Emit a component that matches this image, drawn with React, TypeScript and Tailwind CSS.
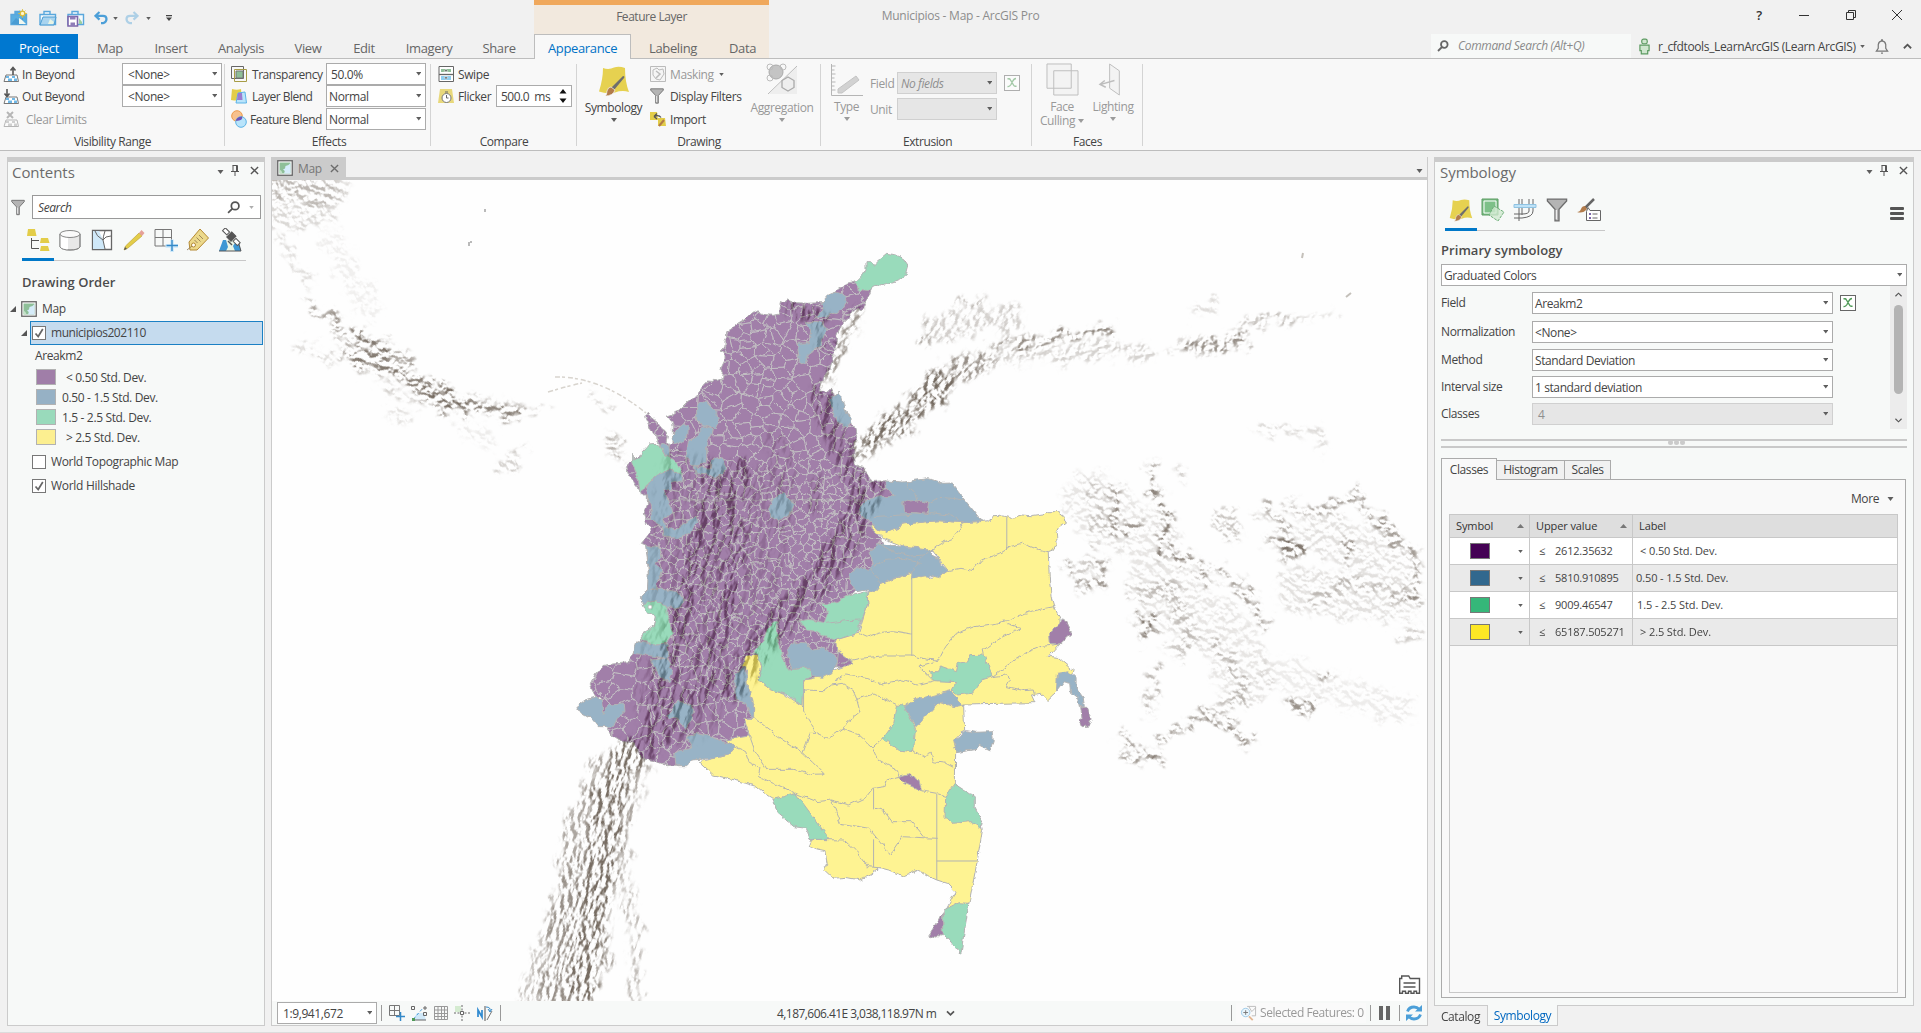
import React from "react";

/* ---------- small shared pieces ---------- */

const Caret = ({ className = "h-[3.5px] w-[5.5px]" }: { className?: string }) => (
  <svg viewBox="0 0 6 4" className={`shrink-0 ${className}`} fill="#5e5e5e">
    <path d="M0 0h6L3 4z" />
  </svg>
);

const CaretUp = () => (
  <svg viewBox="0 0 7 4" className="h-[4px] w-[7px] shrink-0" fill="#777">
    <path d="M0 4h7L3.500 0z" />
  </svg>
);

const CloseX = ({ className = "h-[10px] w-[10px]" }: { className?: string }) => (
  <svg viewBox="0 0 10 10" className={className} stroke="#555" strokeWidth="1.5" fill="none">
    <path d="M1 1l8 8M9 1L1 9" />
  </svg>
);

const Pin = () => (
  <svg viewBox="0 0 8 11" className="h-[11px] w-[8px]" stroke="#555" fill="none">
    <path d="M1.500.5h5M2 .5v6M5.500.5v6M6.500.5v6M0 6.500h8M4 7v4" />
  </svg>
);

function Select({
  value,
  className = "",
  disabled = false,
  italic = false,
}: {
  value: string;
  className?: string;
  disabled?: boolean;
  italic?: boolean;
}) {
  return (
    <div
      className={`flex h-[22px] shrink-0 items-center justify-between border pr-[4px] ${
        disabled ? "border-[#d0d0d0] bg-[#e6e6e6] text-[#8f8f8f]" : "border-[#ababab] bg-white"
      } ${className}`}
    >
      <span className={`pt-[2px] ${italic ? "italic" : ""}`}>{value}</span>
      <Caret />
    </div>
  );
}

const BrushSheet = ({ className }: { className: string }) => (
  <svg viewBox="0 0 32 32" className={className}>
    <path d="M5 3q6 2 11-.5 5-1.500 11 .5 0 14 4 24-7-2-14 .5-8 2-16-1Q5 14 5 3z" fill="#e6d150" />
    <path d="M25 11q2 0 1 2l-10 12-3-2z" fill="#6e6e6e" />
    <path d="M13 22l4 3q-2 6-10 6 2-1 2-5 1-4 4-4z" fill="#b27b4a" stroke="#f7f9f8" strokeWidth=".7" />
  </svg>
);

const Funnel = ({ className }: { className: string }) => (
  <svg viewBox="0 0 16 18" className={className} fill="#b4b4b4" stroke="#6d6d6d">
    <path d="M.8.8h14.400v1.500L9.500 8.500v8.700H6.500V8.500L.8 2.300z" />
    <path d="M7.500 9v7" stroke="#eee" />
  </svg>
);

const MapIcon = () => (
  <svg viewBox="0 0 16 16" className="h-[16px] w-[16px] shrink-0">
    <rect x=".75" y=".75" width="14.500" height="14.500" fill="#fff" stroke="#666" strokeWidth="1.300" />
    <path d="M2.500 2.500h11v11h-11z" fill="#8ebf98" />
    <path d="M13.500 3v10.500H7l.8-2.500L6 9.500l2-1 .5-2.500 3-1z" fill="#d6ecfa" />
    <path d="M2.500 9.500l2 1.500 1 2.500h-3z" fill="#c5e2ca" />
  </svg>
);

const ExprIcon = ({ faded = false }: { faded?: boolean }) => (
  <svg viewBox="0 0 16 16" className={`h-[16px] w-[16px] shrink-0 ${faded ? "opacity-50" : ""}`} fill="none">
    <rect x=".5" y=".5" width="15" height="15" fill="#fff" stroke="#666" />
    <path d="M3.500 4q2-1 3 1l3 5q1 2 3 1M12 3.500q-2 0-3.500 3L7 9.500q-1.500 2.500-3.500 2" stroke="#4f9a57" strokeWidth="1.400" />
  </svg>
);

/* ---------- ribbon ---------- */

const FolderIcon = ({ kind }: { kind: "new" | "open" | "save" }) => (
  <svg viewBox="0 0 18 18" className="h-[18px] w-[18px]" fill="none">
    <path d="M5 5V2.500h6V5M1 5.500h15.500v10H1z" stroke="#5aa7dc" strokeWidth="1.400" fill={kind === "new" ? "#5aaee0" : "#f4fafd"} />
    {kind === "new" && <path d="M1 15l5-6 4 3 3-4v8z" fill="#4a9cd3" />}
    {kind === "new" && <path d="M9 15V9l3 2 4 4z" fill="#f2f8f0" />}
    {kind === "new" && <path d="M12.500 0v9M8 4.500h9M9.500 1.500l6 6M15.500 1.500l-6 6" stroke="#d9bb3c" strokeWidth=".8" />}
    {kind === "new" && <circle cx="12.500" cy="4.500" r="2.300" fill="#fff6cf" stroke="#d9bb3c" strokeWidth="1.300" />}
    {kind === "open" && <path d="M4 8h13l-2 8H1z" fill="#a9d4ef" stroke="#4a9cd3" />}
    {kind === "open" && <path d="M9 15l2-5 4 3-1 2z" fill="#e9f4e4" />}
    {kind === "save" && <path d="M1 7.500h9.500v9.500H1z" fill="#fff" stroke="#7d67ab" strokeWidth="1.600" />}
    {kind === "save" && <path d="M3 7.500h5.500v3H3zM3.500 13.500h4.500V17H3.500z" fill="#8f7db8" />}
    {kind === "save" && <path d="M12 9l3 4v2h-3z" fill="#9fcf9f" />}
  </svg>
);

const UndoIcon = ({ redo = false }: { redo?: boolean }) => (
  <svg viewBox="0 0 14 14" className={`h-[14px] w-[14px] ${redo ? "-scale-x-100 opacity-40" : ""}`} fill="none" stroke="#4c9fd8" strokeWidth="2.200">
    <path d="M5.500 1L1.500 4.800l4 3.800M2 4.800h7q3.500 0 3.500 3.200T9 12.200H7" />
  </svg>
);

function TitleBar() {
  return (
    <div className="flex h-[34px] bg-[#f1f1f1]">
      <div className="flex w-[534px] items-center pt-[2px] pl-[10px]">
        <FolderIcon kind="new" />
        <div className="w-[11px]" />
        <FolderIcon kind="open" />
        <div className="w-[10px]" />
        <FolderIcon kind="save" />
        <div className="w-[9px]" />
        <UndoIcon />
        <Caret className="ml-[5px] h-[3px] w-[5px]" />
        <div className="w-[7px]" />
        <UndoIcon redo />
        <Caret className="ml-[7px] h-[3px] w-[5px]" />
        <svg viewBox="0 0 7 7" className="ml-[15px] h-[6px] w-[6px]" fill="#444">
          <path d="M0 0h7v1.400H0zM0 3h7L3.500 7z" />
        </svg>
      </div>
      <div className="flex w-[235px] justify-center border-t-[5px] border-[#f0a85c] bg-[#f2e9de] pt-[3px] tracking-[-0.45px] text-[#666]">Feature Layer</div>
      <div className="flex w-[383px] justify-center pt-[7px] tracking-[-0.25px] text-[#8d8d8d]">Municipios - Map - ArcGIS Pro</div>
      <div className="flex flex-1 items-start justify-end pt-[7px] pr-[18px]">
        <span className="w-[12px] text-center text-[13px] leading-[16px] font-semibold text-[#333]">?</span>
        <svg viewBox="0 0 144 16" className="ml-[34px] h-[16px] w-[104px]" preserveAspectRatio="xMaxYMid slice" stroke="#333" fill="none">
          <path d="M40 8.500h10M87.500 5.500h7v7h-7zM89.500 5.500v-2h7v7h-2M133 3l10 10M143 3l-10 10" />
        </svg>
      </div>
    </div>
  );
}

const tabs: [string, string][] = [
  ["Map", "w-[64px]"],
  ["Insert", "w-[58px]"],
  ["Analysis", "w-[82px]"],
  ["View", "w-[52px]"],
  ["Edit", "w-[60px]"],
  ["Imagery", "w-[70px]"],
  ["Share", "w-[70px]"],
];

function TabRow() {
  return (
    <div className="flex h-[25px] bg-[#f1f1f1] text-[13px] tracking-[-0.35px] text-[#666]">
      <div className="flex w-[78px] items-center justify-center bg-[#0078d0] pt-[4px] text-white">Project</div>
      {tabs.map(([t, w]) => (
        <div key={t} className={`flex items-center justify-center border-b border-[#bdbdbd] pt-[6px] ${w}`}>
          {t}
        </div>
      ))}
      <div className="flex w-[97px] items-center justify-center border-x border-t border-[#bdbdbd] bg-[#f8f8f8] pt-[4px] text-[#0072c6]">Appearance</div>
      <div className="flex w-[138px] items-center border-b border-[#bdbdbd] bg-[#f2e9de] pt-[6px] pl-[18px]">
        <span className="w-[80px]">Labeling</span>
        <span>Data</span>
      </div>
      <div className="flex flex-1 items-center justify-end border-b border-[#bdbdbd] pr-[9px] text-[12px]">
        <div className="flex h-[24px] w-[200px] items-center bg-[#f7f9f8] pl-[6px] tracking-[-0.33px] text-[#8a8a8a] italic">
          <svg viewBox="0 0 12 12" className="mr-[9px] h-[12px] w-[12px]" fill="none" stroke="#666" strokeWidth="1.800">
            <circle cx="7.300" cy="4.500" r="3.300" />
            <path d="M5 7L1 11" />
          </svg>
          Command Search (Alt+Q)
        </div>
        <svg viewBox="0 0 12 18" className="ml-[8px] h-[17px] w-[11px]" fill="#cfe6cf" stroke="#5b9a60" strokeWidth="1.300">
          <rect x="3" y="1" width="6" height="5" rx="2" />
          <path d="M1 7.500h10v6H9.500v3.500h-7v-3.500H1z" />
        </svg>
        <span className="ml-[8px] w-[201px] pt-px tracking-[-0.36px] whitespace-nowrap text-[#444]">r_cfdtools_LearnArcGIS (Learn ArcGIS)</span>
        <Caret className="ml-[1px] h-[3px] w-[5px]" />
        <svg viewBox="0 0 14 16" className="ml-[10px] h-[15px] w-[14px]" fill="none" stroke="#777" strokeWidth="1.300">
          <path d="M1 13h12l-2-3V6q-.5-3.500-4-4-3.500.5-4 4v4zM6 1h2M6 15h2" />
        </svg>
        <svg viewBox="0 0 10 6" className="ml-[14px] h-[6px] w-[9px]" fill="none" stroke="#555" strokeWidth="2">
          <path d="M1 5.500l4-4 4 4" />
        </svg>
      </div>
    </div>
  );
}

function Group({ name, className, children }: { name: string; className: string; children: React.ReactNode }) {
  return (
    <div className={`relative flex shrink-0 flex-col pt-[4px] ${className}`}>
      <div className="h-[69px] shrink-0">{children}</div>
      <div className="shrink-0 pt-[1px] text-center leading-[18px]">{name}</div>
      <div className="absolute top-[5px] right-0 h-[82px] w-px bg-[#d4d4d4]" />
    </div>
  );
}

const BeyondIcon = ({ kind }: { kind: "in" | "out" | "clear" }) => (
  <svg viewBox="0 0 16 16" className={`h-[16px] w-[16px] shrink-0 ${kind === "clear" ? "opacity-50" : ""}`}>
    <path d="M3 9h11l1.500 6.500H1z" fill="#fff" stroke="#777" />
    <path d="M3 10h3v2H3zM9 10h3v2H9zM5 12.500h4v2.500H5zM11 12.500h3V15h-3z" fill={kind === "clear" ? "#aaa" : "#6fb7e6"} />
    {kind === "in" && <path d="M10 9V2M7.500 4.500L10 1.500l2.500 3" stroke="#555" strokeWidth="1.600" fill="none" />}
    {kind === "out" && <path d="M4 1v7M1.500 5.500L4 8.500l2.500-3" stroke="#555" strokeWidth="1.600" fill="none" />}
    {kind === "clear" && <path d="M4 1l6 6M10 1L4 7" stroke="#777" strokeWidth="2" fill="none" />}
  </svg>
);

const BigLabel = ({ children, className = "" }: { children: React.ReactNode; className?: string }) => (
  <div className={`flex flex-col items-center leading-[14px] ${className}`}>{children}</div>
);

function Ribbon() {
  return (
    <div className="flex h-[92px] border-b border-[#bdbdbd] bg-[#f8f8f8]">
      <Group name="Visibility Range" className="w-[225px]">
        {(["In Beyond", "Out Beyond", "Clear Limits"] as const).map((t, i) => (
          <div key={t} className={`flex h-[22px] items-center pl-[3px] ${i === 2 ? "mt-[1px] text-[#999]" : ""}`}>
            <BeyondIcon kind={(["in", "out", "clear"] as const)[i]} />
            <span className={`${i === 2 ? "ml-[7px]" : "ml-[3px]"} w-[100px] pt-[2px]`}>{t}</span>
            {i < 2 && <Select value="<None>" className="w-[100px] pl-[5px]" />}
          </div>
        ))}
      </Group>
      <div className="w-[2px]" />

      <Group name="Effects" className="w-[204px]">
        <div className="flex h-[22px] items-center pl-[4px]">
          <svg viewBox="0 0 16 16" className="h-[16px] w-[16px]" fill="none" stroke="#666">
            <path d="M.5.5h12v12H.5z" />
            <path d="M3.500 3.500h12v12h-12z" stroke="#a79c46" />
            <path d="M5 5h7v7H5z" fill="#8fbf98" stroke="#777" />
          </svg>
          <span className="ml-[5px] w-[74px] pt-[2px] tracking-[-0.45px]">Transparency</span>
          <Select value="50.0%" className="w-[100px] pl-[4px]" />
        </div>
        <div className="flex h-[22px] items-center pl-[4px]">
          <svg viewBox="0 0 16 16" className="h-[16px] w-[16px]">
            <path d="M1 1q5 1.500 9 0l1 11q-5 1-11 0z" fill="#e3cd49" />
            <path d="M7 5l7-1 1.500 11H5z" fill="#b9e4fb" stroke="#5db3e6" />
            <path d="M7 5h4l.5 7H6z" fill="#9b7bd0" />
          </svg>
          <span className="ml-[5px] w-[74px] pt-[2px] tracking-[-0.5px]">Layer Blend</span>
          <Select value="Normal" className="w-[100px] pl-[2px]" />
        </div>
        <div className="mt-[1px] flex h-[22px] items-center pl-[4px]">
          <svg viewBox="0 0 16 18" className="h-[18px] w-[16px]">
            <circle cx="6" cy="6" r="5.300" fill="#f7c18d" stroke="#ec9a4a" />
            <circle cx="10" cy="12" r="5.300" fill="#b9e4fb" stroke="#5db3e6" />
            <path d="M5 11q0-4 6-4.500 1.500 4-6 4.500z" fill="#6d52b8" />
          </svg>
          <span className="ml-[3px] w-[76px] pt-[2px] tracking-[-0.48px] whitespace-nowrap">Feature Blend</span>
          <Select value="Normal" className="w-[100px] pl-[2px]" />
        </div>
      </Group>

      <Group name="Compare" className="w-[146px]">
        <div className="flex h-[22px] items-center pl-[7px]">
          <svg viewBox="0 0 16 16" className="h-[16px] w-[16px]" fill="none" stroke="#666">
            <path d="M1 .5h14.500v15H1z" fill="#fff" />
            <path d="M3 3h10v3H3z" fill="#8fbf98" stroke="none" />
            <path d="M3 10h10v4H3z" fill="#8fcdf0" stroke="none" />
            <path d="M1 8.500h14.500" strokeWidth="1.300" />
            <path d="M8 3l2 2.500H6zM8 13.500l2-2.500H6z" fill="#555" stroke="#fff" strokeWidth=".5" />
          </svg>
          <span className="ml-[4px] pt-[2px]">Swipe</span>
        </div>
        <div className="flex h-[22px] items-center pl-[7px]">
          <svg viewBox="0 0 16 16" className="h-[16px] w-[16px]">
            <path d="M2 1h12l2 14H0z" fill="#e8d87b" />
            <circle cx="8.500" cy="10" r="4.500" fill="#fff" stroke="#777" />
            <path d="M8.500 7v3h2M7 4h3" stroke="#666" fill="none" />
          </svg>
          <span className="ml-[4px] w-[38px] pt-[2px]">Flicker</span>
          <div className="flex h-[22px] w-[76px] items-center justify-between border border-[#ababab] bg-white pr-[4px] pl-[4px]">
            <span className="pt-[2px] tracking-[-0.5px]">500.0&nbsp; ms</span>
            <svg viewBox="0 0 8 14" className="h-[14px] w-[8px]" fill="#111">
              <path d="M.5 4.500L4 0l3.500 4.500zM.5 9.500L4 14l3.500-4.500z" />
            </svg>
          </div>
        </div>
      </Group>

      <Group name="Drawing" className="w-[244px]">
        <div className="flex">
          <BigLabel className="w-[73px] pt-[2px]">
            <BrushSheet className="mb-[4px] h-[32px] w-[32px]" />
            <span>Symbology</span>
            <Caret className="mt-[3px] h-[4px] w-[6px]" />
          </BigLabel>
          <div className="w-[96px]">
            <div className="flex h-[22px] items-center text-[#999]">
              <svg viewBox="0 0 16 16" className="mr-[4px] h-[16px] w-[16px]" fill="#f5f5f5" stroke="#bbb">
                <path d="M.5.5h15v15H.5zM3 4l4-2 2 2 4-1 1 5-4 6-4-1-3-4z" />
                <path d="M6 5l4 3-4 4" strokeWidth="1.500" />
              </svg>
              <span className="pt-[2px]">Masking</span>
              <Caret className="ml-[5px] h-[3px] w-[5px]" />
            </div>
            <div className="flex h-[22px] items-center whitespace-nowrap">
              <Funnel className="mr-[6px] h-[16px] w-[14px]" />
              <span className="pt-[2px]">Display Filters</span>
            </div>
            <div className="mt-[1px] flex h-[22px] items-center">
              <svg viewBox="0 0 16 16" className="mr-[4px] h-[16px] w-[16px]">
                <path d="M0 1h7l1 8H0zM8 7h7l1 8H8z" fill="#e3cd49" />
                <path d="M4 5.500q5-2 7 1M4 5.500l3-3M4 5.500l3 2.500" stroke="#555" fill="none" strokeWidth="1.300" />
                <path d="M14 9l-5 6" stroke="#b27b4a" strokeWidth="2" />
              </svg>
              <span className="pt-[2px]">Import</span>
            </div>
          </div>
          <BigLabel className="w-[72px] text-[#999]">
            <svg viewBox="0 0 32 32" className="mb-[6px] h-[32px] w-[32px]" fill="none" stroke="#bcbcbc">
              <path d="M3 31L31 3v28z" fill="#eee" stroke="none" />
              <path d="M2 31L31 3" />
              <circle cx="10" cy="9" r="7" fill="#c4c4c4" stroke="#aaa" />
              <circle cx="4" cy="4" r="3" />
              <circle cx="17" cy="4" r="3" />
              <circle cx="4" cy="15" r="3" />
              <path d="M22 14l6 3.500v7L22 28l-6-3.500v-7z" stroke="#aaa" strokeWidth="1.300" />
            </svg>
            <span>Aggregation</span>
            <Caret className="mt-[3px] h-[4px] w-[6px] opacity-60" />
          </BigLabel>
        </div>
      </Group>
      <div className="w-[2px]" />

      <Group name="Extrusion" className="w-[209px]">
        <div className="flex text-[#999]">
          <BigLabel className="w-[47px] pt-[1px]">
            <svg viewBox="0 0 32 32" className="mb-[4px] h-[32px] w-[32px]" fill="none" stroke="#b5b5b5">
              <path d="M.5 0v31.500H32M.5 2h4M.5 6h3M.5 10h4M.5 14h3M.5 18h4M.5 22h3M.5 26h4" />
              <path d="M25 12l3 4L11 29H7v-4z" fill="#d2d2d2" stroke="#c4c4c4" />
            </svg>
            <span>Type</span>
            <Caret className="mt-[3px] h-[4px] w-[6px] opacity-60" />
          </BigLabel>
          <div className="flex-1 pt-[9px]">
            <div className="flex h-[22px] items-center">
              <span className="w-[27px] pt-[2px]">Field</span>
              <Select value="No fields" italic disabled className="w-[100px] pl-[3px]" />
              <div className="w-[7px]" />
              <ExprIcon faded />
            </div>
            <div className="mt-[4px] flex h-[22px] items-center">
              <span className="w-[27px] pt-[2px]">Unit</span>
              <Select value="" disabled className="w-[100px]" />
            </div>
          </div>
        </div>
      </Group>

      <Group name="Faces" className="w-[111px]">
        <div className="flex pl-[3px] text-[#999]">
          <BigLabel className="w-[54px]">
            <svg viewBox="0 0 34 34" className="mb-[4px] h-[33px] w-[33px]" fill="#f3f3f3" stroke="#bdbdbd">
              <path d="M1 1h25v25H1zM8 8h25v25H8z" />
            </svg>
            <span>Face</span>
            <span className="flex items-center">
              Culling <Caret className="ml-[3px] h-[4px] w-[6px] opacity-60" />
            </span>
          </BigLabel>
          <BigLabel className="w-[48px]">
            <svg viewBox="0 0 32 34" className="mb-[4px] h-[33px] w-[31px]" fill="#f3f3f3" stroke="#bdbdbd">
              <path d="M12 1l10 7v25l-10-7z" />
              <path d="M17 18L3 22M7 18l-5 4 6 3" fill="none" strokeWidth="1.500" />
            </svg>
            <span>Lighting</span>
            <Caret className="mt-[3px] h-[4px] w-[6px] opacity-60" />
          </BigLabel>
        </div>
      </Group>
    </div>
  );
}

/* ---------- contents pane ---------- */

function PaneHeader({ title }: { title: string }) {
  return (
    <div className="flex h-[29px] items-start justify-between pr-[5px] pl-[4px]">
      <span className="text-[15px] leading-[20px] tracking-[-0.05px] text-[#6b6b6b]">{title}</span>
      <div className="flex items-center pt-[3px]">
        <Caret className="mt-[2px] mr-[7px] h-[4px] w-[7px]" />
        <Pin />
        <CloseX className="ml-[11px] h-[9px] w-[9px]" />
      </div>
    </div>
  );
}

const contentIcons = [
  <svg key="0" viewBox="0 0 24 24" className="h-[24px] w-[24px]">
    <path d="M2 1h7l1.500 7H1zM15 10h7l1.500 5H14zM15 18h7l1.500 5H14z" fill="#e3cd49" />
    <path d="M5.500 10v10.500H13M5.500 12.500H13" fill="none" stroke="#555" />
  </svg>,
  <svg key="1" viewBox="0 0 24 24" className="h-[24px] w-[24px]" stroke="#888">
    <path d="M2 6v13q2 3 10 3t10-3V6" fill="#e8e8e8" />
    <path d="M2 19V6h8v16q-6 0-8-3z" fill="#fff" stroke="none" />
    <path d="M2 6v13q2 3 10 3t10-3V6" fill="none" />
    <ellipse cx="12" cy="6" rx="10" ry="3.500" fill="#fafafa" />
  </svg>,
  <svg key="2" viewBox="0 0 24 24" className="h-[24px] w-[24px]" stroke="#666">
    <path d="M2.500 2.500h19v19h-19z" fill="#fff" strokeWidth="1.300" />
    <path d="M3 3h6l4 9 2 9H3z" fill="#cfe8f8" stroke="none" />
    <path d="M5 3q1 5 8 9l2 9M13 12q2-4 8-4M13 12q0-3 2-9" fill="none" />
  </svg>,
  <svg key="3" viewBox="0 0 24 24" className="h-[24px] w-[24px]">
    <path d="M17 5l3 3L6 20l-4 2 1.500-4z" fill="#e3cd49" stroke="#b89a2c" strokeWidth=".6" />
    <path d="M17 5l2.500-3 3 3L20 8z" fill="#e5a19a" />
    <path d="M2 22l1-3 2 2z" fill="#555" />
  </svg>,
  <svg key="4" viewBox="0 0 24 24" className="h-[24px] w-[24px]" fill="none" stroke="#777">
    <path d="M1 1.500h16.500v16.500H1zM9 1.500V18M1 9.500h16.500" />
    <path d="M18 11.500V24M11.500 18H24" stroke="#cbe8fa" strokeWidth="3.500" />
    <path d="M18 12v11M12.500 17.500H24" stroke="#3489c8" strokeWidth="1.400" />
  </svg>,
  <svg key="5" viewBox="0 0 24 24" className="h-[24px] w-[24px]" fill="#ecd98b" stroke="#b58a34">
    <path d="M14 1l8.500 9-11.500 12H4L3 14z" />
    <circle cx="7.500" cy="17" r="2" fill="#fff" />
    <path d="M13 7l4 4M10.500 9.500l4 4M8.500 12l3 3M1 22l5-4" stroke="#8b744c" strokeWidth=".8" />
  </svg>,
  <svg key="6" viewBox="0 0 24 24" className="h-[24px] w-[24px]">
    <path d="M5 12h15l3 11H1z" fill="#3c97d4" />
    <path d="M8 12l2 7-2 4h9l-2-5 4-6z" fill="#e9f5e7" />
    <path d="M1 23h22l-3-10" fill="none" stroke="#555" />
    <g transform="rotate(45 13 9)" stroke="#555" fill="#fff">
      <path d="M2.500 6.500h6v4h-6zM17.500 6.500h6v4h-6z" />
      <path d="M10 5h6v7h-6z" fill="#555" />
    </g>
    <path d="M10 13l4 4" stroke="#555" strokeWidth="1.500" />
  </svg>,
];

const Check = ({ on }: { on: boolean }) => (
  <div className="flex h-[14px] w-[14px] shrink-0 items-center justify-center border border-[#777] bg-white">
    {on && (
      <svg viewBox="0 0 10 10" className="h-[10px] w-[10px]" fill="none" stroke="#666" strokeWidth="1.700">
        <path d="M1.500 5.500l2.700 3L8.800 1" />
      </svg>
    )}
  </div>
);

const Expander = () => (
  <svg viewBox="0 0 7 7" className="h-[6px] w-[6px]" fill="#555">
    <path d="M7 0v7H0z" />
  </svg>
);

const legend: [string, string, string][] = [
  ["bg-[#a07ea8]", "< 0.50 Std. Dev.", "pl-[10px]"],
  ["bg-[#96b1c5]", "0.50 - 1.5 Std. Dev.", "pl-[6px]"],
  ["bg-[#99dabb]", "1.5 - 2.5 Std. Dev.", "pl-[6px]"],
  ["bg-[#fcef90]", "> 2.5 Std. Dev.", "pl-[10px]"],
];

function Contents() {
  return (
    <div className="flex w-[258px] shrink-0 flex-col border border-t-[5px] border-[#cbcbcb] bg-[#f7f9f8]">
      <PaneHeader title="Contents" />
      <div className="mt-[4px] flex h-[24px] items-center pl-[3px]">
        <Funnel className="h-[17px] w-[14px]" />
        <div className="ml-[7px] flex h-[24px] w-[229px] items-center border border-[#999] bg-white pl-[5px]">
          <span className="flex-1 pt-px italic">Search</span>
          <svg viewBox="0 0 12 12" className="h-[13px] w-[13px]" fill="none" stroke="#555" strokeWidth="1.600">
            <circle cx="7.500" cy="4.500" r="3.500" />
            <path d="M5 7L1 11" />
          </svg>
          <Caret className="mr-[6px] ml-[9px] h-[3px] w-[5px] opacity-50" />
        </div>
      </div>
      <div className="mt-[8px] flex pl-[14px]">
        {contentIcons.map((ic, i) => (
          <div key={i} className={`flex h-[34px] w-[32px] justify-center pt-[1px] ${i === 0 ? "border-b-[3px] border-[#0078c8]" : "border-b border-[#c8c8c8]"}`}>
            {ic}
          </div>
        ))}
      </div>
      <div className="mt-[11px] pl-[14px] text-[13px] leading-[20px] font-semibold tracking-[0.05px] text-[#4c4c4c]">Drawing Order</div>
      <div className="mt-[8px] flex h-[18px] items-center pl-[2px]">
        <Expander />
        <div className="w-[5px]" />
        <MapIcon />
        <span className="ml-[5px]">Map</span>
      </div>
      <div className="mt-[3px] flex items-center">
        <div className="w-[22px] pl-[13px]">
          <Expander />
        </div>
        <div className="flex h-[24px] w-[233px] items-center border border-[#1b80c4] bg-[#c5dbee] pl-[1px]">
          <Check on />
          <span className="pl-[5px] tracking-[-0.45px]">municipios202110</span>
        </div>
      </div>
      <div className="mt-[1px] mb-[1px] pl-[27px] leading-[20px]">Areakm2</div>
      {legend.map(([c, t, p]) => (
        <div key={t} className="flex h-[20px] items-center pl-[28px]">
          <div className={`h-[16px] w-[20px] border border-[#b2b2b2] ${c}`} />
          <span className={`pt-[2px] tracking-[-0.35px] ${p}`}>{t}</span>
        </div>
      ))}
      <div className="mt-[5px] flex h-[20px] items-center pl-[24px]">
        <Check on={false} />
        <span className="pl-[5px] tracking-[-0.35px]">World Topographic Map</span>
      </div>
      <div className="mt-[4px] flex h-[20px] items-center pl-[24px]">
        <Check on />
        <span className="pl-[5px] tracking-[-0.3px]">World Hillshade</span>
      </div>
    </div>
  );
}

/* ---------- map drawing ---------- */

const P = "#440154";
const B = "#31688e";
const G = "#35b779";
const Y = "#fde725";

const purpleNorth =
  "893,122 860,130 832,150 800,175 785,188 740,190 705,188 685,180 665,187 660,205 658,222 640,226 615,224 585,212 570,225 555,240 530,255 515,265 500,275 500,290 495,300 495,320 480,330 492,335 492,360 480,385 490,400 488,415 470,422 445,420 430,435 415,460 400,475 380,490 360,510 345,520 322,528 335,545 340,560 340,600 330,612 318,605 322,590 318,575 305,565 290,545 270,530 265,517 257,530 265,550 280,580 290,600 300,614 270,620 215,665 200,680 205,700 218,720 225,740 240,750 245,765 262,765 262,790 268,810 250,820 260,850 275,870 270,900 940,900 1000,770 975,735 978,722 935,725 920,700 915,682 900,680 882,670 882,610 892,600 885,565 875,545 850,500 835,458 820,465 815,443 800,455 775,453 785,430 795,405 810,385 820,350 825,330 830,290 845,255 865,235 880,208 908,205 925,170 938,140";
const purpleSouth =
  "250,0 235,40 250,60 255,95 228,130 240,135 245,180 248,230 245,265 225,295 240,305 270,350 265,375 225,420 205,460 190,488 150,492 120,497 100,520 85,550 90,570 100,590 115,590 120,640 135,685 145,705 175,725 205,728 215,745 228,775 260,782 300,797 330,795 400,770 490,738 465,722 490,715 530,705 515,655 545,655 600,560 700,540 775,500 820,488 775,455 775,420 800,400 800,300 820,280 900,200 905,130 880,90 860,0";

const northShapes: [string, string][] = [
  [G, "918,68 935,68 940,76 950,65 968,50 980,40 1010,45 1030,58 1045,80 1040,100 1015,120 985,130 940,138 925,155 895,150 890,125 910,105 918,90"],
  [G, "218,640 222,660 235,655 245,640 262,622 270,612 290,610 300,622 310,640 325,652 340,658 355,675 368,705 362,710 350,695 325,690 300,700 280,715 262,730 255,745 240,755 235,720 225,690 218,670"],
  [B, "820,465 835,458 845,465 850,490 860,520 875,545 862,560 845,568 850,553 830,545 818,515 808,480"],
  [B, "265,765 258,745 270,725 300,700 325,690 350,695 365,705 368,722 335,730 330,745 310,750 325,775 335,800 338,820 310,835 318,862 345,870 405,828 412,850 385,880 350,895 310,890 305,860 275,840 272,800"],
  [B, "410,500 420,485 440,487 470,520 477,545 468,565 430,557 410,540"],
  [B, "345,575 370,552 385,560 383,590 365,605 342,612 335,600"],
  [B, "385,605 410,590 430,560 460,568 455,590 440,605 440,650 438,670 400,680 378,650"],
  [B, "400,680 455,685 455,660 485,650 500,690 465,715 440,700 405,702"],
  [B, "305,610 330,615 332,655 315,645 300,622"],
  [B, "625,805 640,775 670,758 690,780 705,790 690,825 655,842 630,830"],
  [B, "785,188 805,165 825,157 850,162 860,185 845,210 800,228 768,232 790,205"],
  [B, "735,245 780,245 800,265 780,320 745,345 735,370 718,365 712,310 748,308 752,270"],
];

const southShapes: [string, string][] = [
  [Y, "873,72 890,90 915,97 945,85 960,72 1000,68 1060,62 1130,68 1175,65 1200,62 1215,50 1240,48 1265,55 1290,48 1320,50 1355,45 1365,35 1395,35 1410,48 1415,70 1400,80 1390,100 1392,130 1380,150 1367,155 1370,230 1375,290 1383,320 1400,355 1400,432 1385,450 1367,472 1395,475 1440,515 1393,560 1390,575 1365,600 1345,580 1320,585 1330,608 1130,612 1133,690 1108,720 1107,850 1140,890 1175,960 1183,990 1168,1085 1145,1210 1110,1215 1080,1232 1107,1175 1085,1150 1055,1140 1035,1130 1005,1110 960,1128 920,1110 895,1103 870,1125 840,1140 800,1132 765,1135 740,1110 748,1090 742,1055 720,1050 697,1040 705,1020 720,1018 660,900 597,898 570,880 545,858 520,850 490,840 430,825 390,785 470,765 490,740 465,722 500,710 530,705 515,655 545,655 545,620 530,575 522,560 525,510 508,495 520,470 555,465 567,490 555,540 580,560 640,590 680,620 682,540 710,535 770,510 820,488 775,455 772,420 835,400 862,310 860,275 900,250 985,218 1045,232 1087,212 1060,175 1040,148 960,138 905,115 873,85"],
  [B, "874,72 890,90 915,97 945,85 960,72 1000,68 1060,62 1130,68 1180,62 1150,22 1122,-15 1096,-51 1072,-50 1053,-58 1029,-64 1000,-60 982,-57 960,-54 912,-57 912,-38 936,-10 895,-10 869,-5 848,10 835,35"],
  [P, "962,2 985,6 1012,0 1032,6 1028,44 1000,38 965,38"],
  [B, "890,130 960,140 1040,148 1040,165 1060,175 1070,195 1087,212 1060,232 1040,225 985,234 985,218 950,230 900,250 880,275 860,270 830,275 810,240 810,225 830,200 865,208 878,190 865,155 880,145"],
  [G, "735,312 770,310 800,290 860,275 862,310 850,345 845,360 830,400 770,420 740,410 720,395 690,390 668,362 700,358 740,368 748,340"],
  [G, "605,362 610,370 608,420 635,500 640,510 700,502 703,530 682,540 680,620 640,585 590,570 555,540 565,500 550,465 540,460 570,420 580,385"],
  [B, "640,440 660,428 690,432 705,450 740,445 770,465 778,485 760,520 735,535 705,530 700,502 650,508 637,470"],
  [B, "490,520 520,500 525,560 540,600 545,655 530,640 520,610 490,600"],
  [G, "232,310 265,303 300,320 300,345 308,360 310,385 318,400 300,430 265,432 225,420 240,395 265,375 270,350 245,340"],
  [B, "225,290 245,270 270,265 330,275 348,300 335,325 300,320 265,303 235,310"],
  [B, "215,425 265,432 300,432 305,460 300,475 240,465 205,460"],
  [B, "255,480 300,475 315,520 305,545 270,520"],
  [B, "240,135 280,145 285,170 265,190 285,210 270,250 270,268 245,268 248,200"],
  [B, "300,650 330,600 345,605 375,625 370,660 350,690 330,655"],
  [B, "47,620 70,600 105,590 115,600 120,640 135,615 180,612 182,635 160,655 150,680 110,680 100,665 60,640"],
  [B, "320,755 370,745 350,710 385,700 420,710 490,738 470,765 430,775 370,780 355,797 325,797"],
  [G, "945,615 965,620 995,685 990,755 945,750 905,715 935,670"],
  [B, "965,620 1000,595 1040,588 1095,572 1110,600 1130,615 1105,620 1060,607 1040,630 998,682"],
  [G, "1040,515 1060,515 1065,498 1110,515 1115,490 1145,485 1150,467 1188,465 1210,530 1180,540 1155,580 1110,585 1098,570 1112,545 1045,542"],
  [B, "1102,722 1120,712 1135,692 1165,697 1210,695 1213,720 1205,750 1175,735 1165,748 1110,758"],
  [B, "1393,520 1425,515 1445,535 1445,560 1465,590 1468,620 1455,620 1450,595 1432,580 1430,550 1410,545 1390,572"],
  [P, "1458,622 1475,622 1487,660 1480,678 1462,680 1452,660 1462,655"],
  [P, "1368,400 1400,370 1408,353 1418,370 1432,400 1400,432 1370,430"],
  [P, "945,830 975,822 1005,840 1012,872 965,850"],
  [P, "780,455 820,488 795,500 775,500"],
  [G, "1105,852 1160,890 1160,920 1182,965 1175,983 1150,965 1100,970 1078,950 1080,890"],
  [G, "597,898 660,880 755,1018 700,1018 690,985 655,980 610,940"],
  [G, "1075,1230 1115,1208 1145,1210 1122,1362 1090,1320 1070,1300"],
  [P, "1072,1238 1070,1300 1055,1315 1030,1308"],
];

const southLines = [
  "1130,68 1100,115 1070,128 1040,148",
  "1087,212 1120,205 1155,212 1180,180 1230,160 1260,140 1295,130 1330,145 1367,155",
  "835,400 860,412 890,400 930,392 985,402",
  "775,490 840,475 900,468 985,468 1030,478 1060,480",
  "1005,498 1060,480 1080,440 1110,400 1160,380 1210,372 1250,362 1300,340 1345,328 1383,320",
  "1250,370 1290,385 1240,410 1185,450 1188,465",
  "1210,530 1260,490 1310,455 1345,440 1400,432",
  "1005,498 1045,542",
  "1210,530 1250,525 1262,535 1250,560 1300,572 1325,570 1330,590",
  "770,545 800,525 860,535 900,552 960,540 1000,555 1045,542",
  "682,570 740,572 760,555 790,550 820,570 830,595 875,580 945,615",
  "830,595 840,635 800,670 790,685 750,715 720,700 682,635",
  "790,685 830,700 875,745 905,715",
  "700,700 690,730 680,760 610,710 545,655",
  "720,700 700,700",
  "530,705 545,750 580,808 655,808 700,823 740,822 710,790 680,760",
  "490,740 520,755 530,790 560,805 555,830 600,850 660,880 720,905 760,900 810,915 860,890 878,865 910,860 915,840 945,830",
  "875,745 890,780 945,812 950,830",
  "990,755 1020,770 1040,760 1045,785 1080,790 1107,805",
  "1012,872 1055,880 1080,890",
  "760,900 785,970 865,985 925,1065 960,1010 1055,1015",
  "878,925 905,930 930,965 985,965 1020,1010",
  "700,1018 795,1020 830,1055 860,1100 895,1103",
  "845,360 800,362 748,370",
  "985,218 1000,185 1040,148",
  "900,250 870,210 910,178 960,175 1010,190",
  "890,130 930,155 985,168 1020,165",
  "875,50 960,45 1040,38 1090,45 1130,68",
  "1032,10 1060,-8 1100,-5 1135,2",
  "970,-54 975,-40 992,-25 1000,5",
];
const straightLines = ["1251,52 1251,146", "985,228 985,468", "1055,880 1055,1140", "1055,1083 1168,1083", "878,865 878,928", "878,1018 878,1103", "682,540 682,635"];

function rng(seed: number) {
  let s = seed;
  return () => {
    s = (s * 1664525 + 1013904223) % 4294967296;
    return s / 4294967296;
  };
}

type Pt = [number, number];

/* Voronoi cells standing for the small municipality borders */
function cells(): string {
  const r = rng(7);
  const sites: Pt[] = [];
  const fill = (x0: number, x1: number, y0: number, y1: number, step: number) => {
    for (let y = y0; y < y1; y += step)
      for (let x = x0; x < x1; x += step) {
        if (r() < 0.12) continue;
        sites.push([x + (r() - 0.5) * step * 1.5, y + (r() - 0.5) * step * 1.5]);
      }
  };
  fill(590, 900, 270, 340, 12.5);
  fill(590, 900, 340, 470, 11.5);
  fill(570, 660, 470, 770, 14);
  fill(660, 870, 470, 680, 8);
  fill(660, 810, 680, 770, 11);
  fill(870, 930, 470, 680, 15);
  const out: string[] = [];
  for (const s of sites) {
    const near = sites
      .map((q) => [(q[0] - s[0]) ** 2 + (q[1] - s[1]) ** 2, q] as [number, Pt])
      .filter(([d]) => d > 0 && d < 1600)
      .sort((a, b) => a[0] - b[0])
      .slice(0, 22);
    let poly: Pt[] = [
      [s[0] - 18, s[1] - 18],
      [s[0] + 18, s[1] - 18],
      [s[0] + 18, s[1] + 18],
      [s[0] - 18, s[1] + 18],
    ];
    for (const [, q] of near) {
      const mx = (s[0] + q[0]) / 2;
      const my = (s[1] + q[1]) / 2;
      const nx = q[0] - s[0];
      const ny = q[1] - s[1];
      const side = (p: Pt) => (p[0] - mx) * nx + (p[1] - my) * ny;
      const next: Pt[] = [];
      poly.forEach((a, i) => {
        const b = poly[(i + 1) % poly.length];
        const da = side(a);
        const db = side(b);
        if (da <= 0) next.push(a);
        if (da < 0 !== db < 0) {
          const t = da / (da - db);
          next.push([a[0] + (b[0] - a[0]) * t, a[1] + (b[1] - a[1]) * t]);
        }
      });
      poly = next;
    }
    if (poly.length > 2) out.push("M" + poly.map((p) => `${p[0].toFixed(1)} ${p[1].toFixed(1)}`).join("L") + "Z");
  }
  return out.join("");
}

const cellPath = cells();

/* [path, width, opacity] */
type Ridge = [string, number, number];

const ridgesNW: Ridge[] = [
  ["M309 305L339 323", 6, 0.8],
  ["M335 325L345 340", 8, 0.6],
  ["M355 335L385 350", 9, 1],
  ["M350 355L385 365L402 375L432 393L459 408", 18, 0.9],
  ["M385 350L410 365", 12, 0.6],
  ["M430 393L459 404L519 412", 12, 0.85],
  ["M592 395L612 408", 4, 0.4],
  ["M608 438L625 462", 7, 0.6],
  ["M380 385L415 404", 4, 0.5],
  ["M302 345L330 355", 8, 0.3],
  ["M533 410L545 408", 4, 0.5],
];
const scattered: Ridge[] = [
  ["M272 205L315 200", 50, 0.26],
  ["M275 185L335 190", 26, 0.3],
  ["M280 240L310 285", 4, 0.4],
  ["M330 240L370 310", 24, 0.1],
  ["M500 466L520 455", 10, 0.35],
  ["M470 430L490 440", 16, 0.12],
  ["M390 410L410 420", 10, 0.2],
];
const ridgesNE: Ridge[] = [
  ["M857 312L848 335L832 365L820 390", 11, 0.75],
  ["M858 452L880 434", 22, 0.7],
  ["M875 436L905 418L924 400L945 380", 24, 1],
  ["M930 400L958 370L982 362", 22, 0.75],
  ["M925 325L930 350", 6, 0.5],
  ["M935 332L975 320L1010 318", 24, 0.32],
  ["M960 305L978 302", 5, 0.7],
  ["M997 345L1008 336", 6, 0.9],
];
const ridgesEW: Ridge[] = [
  ["M1015 344L1045 340L1078 334L1112 330", 8, 0.85],
  ["M1008 354L1060 356L1110 348L1150 354", 14, 0.3],
  ["M1085 330L1108 330", 3, 1],
  ["M1188 343L1205 348L1225 342L1240 340", 14, 0.75],
  ["M1238 328L1255 321L1296 319", 3, 0.9],
  ["M1296 319L1335 314", 3, 0.4],
  ["M1165 353L1185 350", 5, 0.3],
];
const ridgesInner: Ridge[] = [
  ["M712 475L710 520L703 545L692 583L678 633L660 700L646 750", 26, 0.8],
  ["M740 470L738 520L735 567L717 633L703 683L667 733", 24, 0.8],
  ["M870 485L845 540L820 580L788 610L765 640L731 687", 28, 0.85],
  ["M822 395L832 430L850 470L870 500", 22, 0.8],
  ["M818 480L812 510", 8, 0.8],
  ["M775 440L785 470L780 520", 22, 0.3],
  ["M700 500L690 620L680 700", 90, 0.28],
  ["M760 500L740 600", 70, 0.25],
  ["M675 460L665 490", 22, 0.4],
  ["M752 655L745 690", 10, 0.6],
  ["M866 505L874 495", 12, 0.9],
  ["M793 308L820 318", 18, 0.9],
  ["M815 322L822 345", 10, 0.6],
];
const ridgesNS: Ridge[] = [
  ["M632 750L612 790L604 830L600 880L590 930L580 1001", 28, 0.95],
  ["M618 775L596 830L585 890L580 950L565 1001", 58, 0.6],
  ["M605 860L570 930L545 1001", 54, 0.4],
  ["M628 890L636 940L634 1001", 8, 0.5],
];
const highlands: Ridge[] = [
  ["M1115 485L1112 530L1125 535", 8, 0.85],
  ["M1140 525L1120 535", 8, 0.75],
  ["M1150 465L1154 490L1166 515L1163 555", 7, 1],
  ["M1092 485L1100 515L1095 540", 8, 0.35],
  ["M1100 560L1104 575L1080 592", 9, 0.75],
  ["M1080 570L1095 565", 14, 0.35],
  ["M1065 560L1068 570", 5, 1],
  ["M1175 555L1195 560L1207 583", 8, 0.95],
  ["M1225 518L1232 532", 18, 0.4],
  ["M1138 590L1170 590L1180 610L1190 640L1175 650", 16, 0.35],
  ["M1140 615L1144 638L1156 620", 9, 1],
  ["M1220 568L1250 600L1268 625", 9, 0.7],
  ["M1265 510L1285 525L1290 555L1272 540", 12, 0.6],
  ["M1285 545L1300 550", 12, 0.9],
  ["M1290 505L1320 515L1355 495L1380 528", 7, 0.75],
  ["M1350 555L1345 540", 9, 0.9],
  ["M1378 520L1395 540L1415 555L1414 590L1400 600", 9, 0.7],
  ["M1310 600L1350 582L1400 590L1420 600", 8, 0.4],
  ["M1320 530L1380 560L1395 600L1300 590", 46, 0.2],
  ["M1090 500L1150 540L1170 600L1230 640L1245 680", 56, 0.17],
  ["M1155 665L1150 710", 6, 0.6],
  ["M1210 640L1245 680L1240 700L1207 715", 7, 0.5],
  ["M1207 713L1180 728L1162 740", 5, 0.9],
  ["M1210 715L1230 727L1250 742", 7, 0.9],
  ["M1123 735L1130 742", 10, 0.9],
  ["M1128 758L1162 755", 9, 0.9],
  ["M1290 705L1312 705", 13, 0.75],
  ["M1275 672L1340 690L1400 710", 30, 0.12],
  ["M1323 672L1330 678", 5, 0.9],
  ["M1400 640L1420 630", 12, 0.35],
  ["M1260 430L1320 430L1322 450", 8, 0.25],
  ["M1180 470L1181 475", 4, 0.7],
  ["M1195 310L1215 305", 6, 0.3],
];

function Terrain({ ridges, angle, filter }: { ridges: Ridge[]; angle: number; filter: string }) {
  return (
    <g transform={`rotate(${angle} 850 590)`}>
      <g filter={`url(#${filter})`}>
        <g transform={`rotate(${-angle} 850 590)`} fill="none" stroke="#000" strokeLinecap="round" strokeLinejoin="round">
          {ridges.map(([d, w, o]) => (
            <path key={d} d={d} strokeWidth={w} opacity={o} />
          ))}
        </g>
      </g>
    </g>
  );
}

function ReliefFilter({
  id,
  freq,
  seed,
  scale,
  gain,
  bias,
  az,
  warp = 26,
}: {
  id: string;
  freq: string;
  seed: number;
  scale: number;
  gain: number;
  bias: number;
  az: number;
  warp?: number;
}) {
  return (
    <filter id={id} x="-400" y="-400" width="2600" height="2200" filterUnits="userSpaceOnUse" colorInterpolationFilters="sRGB">
      <feTurbulence type="fractalNoise" baseFrequency="0.07" numOctaves={2} seed={seed + 20} result="w" />
      <feGaussianBlur in="SourceAlpha" stdDeviation="2.8" result="soft" />
      <feDisplacementMap in="soft" in2="w" scale={warp} xChannelSelector="R" yChannelSelector="G" result="area" />
      <feTurbulence type="fractalNoise" baseFrequency={freq} numOctaves={3} seed={seed} result="n" />
      <feColorMatrix in="n" type="matrix" values="0 0 0 0 0 0 0 0 0 0 0 0 0 0 0 1 0 0 0 0" result="h" />
      <feDiffuseLighting in="h" surfaceScale={scale} diffuseConstant="1" lightingColor="#fff" result="lit">
        <feDistantLight azimuth={az} elevation={50} />
      </feDiffuseLighting>
      <feColorMatrix in="lit" type="matrix" values={`0 0 0 0 .46 0 0 0 0 .42 0 0 0 0 .38 ${-gain} 0 0 0 ${bias}`} result="shade" />
      <feComposite in="shade" in2="area" operator="in" />
    </filter>
  );
}

const NS = "translate(560 240) scale(.33333)";
const SS = "translate(560 500) scale(.35714 .33333)";

function MapView() {
  return (
    <svg viewBox="272 180 1155 821" className="block h-[821px] w-[1155px] bg-[#fefefe]">
      <defs>
        <ReliefFilter id="reliefA" freq="0.11 0.22" seed={3} scale={6} gain={1.9} bias={1.45} az={215} />
        <ReliefFilter id="reliefB" freq="0.1 0.2" seed={11} scale={6} gain={1.7} bias={1.32} az={240} />
        <ReliefFilter id="reliefInner" freq="0.05 0.13" seed={9} scale={8} gain={1.5} bias={1.2} az={245} warp={10} />
        <ReliefFilter id="reliefC" freq="0.15 0.17" seed={5} scale={6} gain={2} bias={1.46} az={225} />
        <filter id="wiggle" x="550" y="240" width="560" height="730" filterUnits="userSpaceOnUse">
          <feTurbulence type="fractalNoise" baseFrequency="0.15" numOctaves={2} seed={2} />
          <feDisplacementMap in="SourceGraphic" scale="5" xChannelSelector="R" yChannelSelector="G" />
        </filter>
        <clipPath id="muni">
          <polygon points={purpleNorth} transform={NS} />
          <polygon points={purpleSouth} transform={SS} />
        </clipPath>
      </defs>
      <Terrain ridges={ridgesNW} angle={40} filter="reliefC" />
      <Terrain ridges={scattered} angle={60} filter="reliefC" />
      <Terrain ridges={ridgesNE} angle={-48} filter="reliefA" />
      <Terrain ridges={ridgesEW} angle={-8} filter="reliefC" />
      <Terrain ridges={ridgesNS} angle={-72} filter="reliefB" />
      <g clipPath="url(#muni)">
        <Terrain ridges={ridgesInner} angle={-70} filter="reliefInner" />
      </g>
      <Terrain ridges={highlands} angle={50} filter="reliefC" />
      <path d="M555 377Q600 376 646 413M548 392q20-6 34-9" stroke="#d8d4ce" strokeWidth="1.500" strokeDasharray="5 2 3 3" fill="none" />
      <path d="M1302 258l1-5M1346 297l5-4" stroke="#c4c0ba" strokeWidth="2" fill="none" />
      <g opacity=".5">
        <g filter="url(#wiggle)" strokeWidth="1" strokeLinejoin="round">
          <g fill={P} stroke="#686868">
            <polygon points={purpleNorth} transform={NS} vectorEffect="non-scaling-stroke" />
            <polygon points={purpleSouth} transform={SS} vectorEffect="non-scaling-stroke" />
          </g>
          <g clipPath="url(#muni)">
            <path d="M575 520H885V540H575z" fill={P} />
            <path d={cellPath} fill="none" stroke="#8c8c8c" strokeWidth=".7" />
          </g>
          <g stroke="#686868" transform={SS}>
            {southShapes.map(([c, p]) => (
              <polygon key={p} points={p} fill={c} vectorEffect="non-scaling-stroke" />
            ))}
            {southLines.map((p) => (
              <polyline key={p} points={p} fill="none" vectorEffect="non-scaling-stroke" />
            ))}
          </g>
          <g stroke="#686868" transform={NS}>
            {northShapes.map(([c, p]) => (
              <polygon key={p} points={p} fill={c} vectorEffect="non-scaling-stroke" />
            ))}
          </g>
        </g>
        <g stroke="#686868" transform={SS} fill="none">
          {straightLines.map((p) => (
            <polyline key={p} points={p} vectorEffect="non-scaling-stroke" />
          ))}
        </g>
      </g>
      <circle cx="650" cy="607" r="2" fill="#fefefe" stroke="#b2b2b2" strokeWidth=".7" />
      <path d="M485 209v3M469 242v4M470 242h2" stroke="#777" fill="none" />
      <g transform="translate(1399 975)" fill="#fff" stroke="#555" strokeWidth="1.400">
        <path d="M.7 18.300V3.500h2V1h7l1.500 2.500h9.300v14.800h-3v-2h-2.500v2h-3v-2H9.500v2h-3v-2H3.500v2z" />
        <path d="M4.500 8h12M4.500 12h12" fill="none" />
      </g>
    </svg>
  );
}

const VSep = ({ className = "" }: { className?: string }) => <div className={`h-[16px] w-px shrink-0 bg-[#999] ${className}`} />;

function StatusBar() {
  return (
    <div className="flex h-[24px] items-center bg-[#f7f9f8] pl-[5px]">
      <Select value="1:9,941,672" className="w-[100px] pl-[5px]" />
      <VSep className="ml-[4px]" />
      <svg viewBox="0 0 16 16" className="ml-[7px] h-[16px] w-[16px]" fill="none" stroke="#777">
        <path d="M.5.500h10v10H.5zM5.500.500v10M.5 5.500h10" />
        <path d="M11.500 7v9M7 11.500h9" stroke="#3489c8" strokeWidth="1.500" />
      </svg>
      <svg viewBox="0 0 16 16" className="ml-[6px] h-[16px] w-[16px]" fill="none" stroke="#666">
        <path d="M2 15h13l-2-7H6z" fill="#cfe8f8" stroke="none" />
        <path d="M2.500 14L12 3" stroke="#4c9fd8" strokeDasharray="3 2" />
        <path d="M.5 1.500h3v3h-3zM12.500 7.500h3v3h-3zM12 3h4M14 1v4" />
        <path d="M1 13h3v3H1z" fill="#4f9a57" stroke="none" />
        <path d="M4 15h11" />
      </svg>
      <svg viewBox="0 0 14 14" className="ml-[7px] h-[14px] w-[14px]" fill="none" stroke="#999">
        <path d="M.5.500h13v13H.5zM4 .500v13M7.500.500v13M10.500.500v13M.5 4h13M.5 7.500h13M.5 10.500h13" />
      </svg>
      <svg viewBox="0 0 16 16" className="ml-[6px] h-[16px] w-[16px]" fill="none" stroke="#666">
        <path d="M1 1h6v6H1z" fill="#d4ebd0" stroke="none" />
        <path d="M8 0v16M0 8h16" strokeDasharray="2 1.500" />
        <path d="M6.500 6.500h3v3h-3z" fill="#fff" />
      </svg>
      <svg viewBox="0 0 16 16" className="ml-[7px] h-[16px] w-[16px]" fill="none">
        <path d="M1 12V5l4 7V5" stroke="#2f8ad0" strokeWidth="1.700" />
        <path d="M8 1v15" stroke="#555" />
        <path d="M15 6l-5 9" stroke="#777" />
        <path d="M9 2q5 0 4 4M11 4l2 3 2-3" stroke="#3489c8" />
      </svg>
      <VSep className="ml-[7px]" />
      <span className="ml-[276px] w-[163px] pt-[2px] tracking-[-0.55px] whitespace-nowrap">4,187,606.41E 3,038,118.97N m</span>
      <svg viewBox="0 0 10 8" className="ml-[6px] h-[7px] w-[9px]" fill="none" stroke="#555" strokeWidth="2">
        <path d="M1 1.500l4 4 4-4" />
      </svg>
      <div className="flex-1" />
      <VSep className="mr-[4px]" />
      <div className="flex h-[20px] w-[130px] items-center bg-[#fafafa] pl-[4px] tracking-[-0.42px] text-[#999]">
        <svg viewBox="0 0 17 17" className="mr-[3px] h-[16px] w-[17px]" fill="none" stroke="#bbb">
          <path d="M7 1.500h9v10h-4M9 2l3 5 4-4" />
          <circle cx="5.500" cy="8" r="4.500" fill="#e9f5fc" stroke="#9cc9e6" />
          <path d="M3 8h5M5.500 5.500v5" stroke="#777" />
          <path d="M9 12l4 4" stroke="#e3b792" strokeWidth="2" />
        </svg>
        Selected Features: 0
      </div>
      <VSep className="ml-[4px]" />
      <div className="ml-[8px] h-[14px] w-[11px] border-x-[4px] border-[#666]" />
      <VSep className="ml-[9px]" />
      <svg viewBox="0 0 16 16" className="mr-[5px] ml-[6px] h-[16px] w-[16px]" fill="none" stroke="#4c9fd8" strokeWidth="2.800">
        <path d="M1.500 6.500Q3 2 8 2q3 0 5.500 2.500M14.500 9.500Q13 14 8 14q-3 0-5.500-2.500" />
        <path d="M16 0v6.500H9zM0 16V9.500h7z" fill="#4c9fd8" stroke="none" />
      </svg>
    </div>
  );
}

function MapPane() {
  return (
    <div className="ml-[6px] flex w-[1157px] shrink-0 flex-col border-x border-b border-[#cbcbcb]">
      <div className="-ml-px flex h-[20px] justify-between bg-[#f1f1f1]">
        <div className="flex w-[75px] items-center bg-[#cbcbcb] pt-[2px] pl-[6px] text-[#777]">
          <MapIcon />
          <span className="ml-[5px] w-[32px] pt-px">Map</span>
          <CloseX className="h-[9px] w-[9px] opacity-80" />
        </div>
        <Caret className="mt-[12px] mr-[4px] h-[4px] w-[7px]" />
      </div>
      <div className="h-[3px] bg-[#cbcbcb]" />
      <MapView />
      <StatusBar />
    </div>
  );
}

/* ---------- symbology pane ---------- */

const fields: [string, string, string, boolean][] = [
  ["Field", "Areakm2", "mt-[6px]", false],
  ["Normalization", "<None>", "mt-[7px]", false],
  ["Method", "Standard Deviation", "mt-[6px]", false],
  ["Interval size", "1 standard deviation", "mt-[5px]", false],
  ["Classes", " 4", "mt-[5px]", true],
];

const classes: [string, string, string, string][] = [
  ["bg-[#440154]", "2612.35632", "< 0.50 Std. Dev.", "pl-[7px]"],
  ["bg-[#31688e]", "5810.910895", "0.50 - 1.5 Std. Dev.", "pl-[3px]"],
  ["bg-[#35b779]", "9009.46547", "1.5 - 2.5 Std. Dev.", "pl-[4px]"],
  ["bg-[#fde725]", "65187.505271", "> 2.5 Std. Dev.", "pl-[7px]"],
];

const symbologyIcons = [
  <BrushSheet key="0" className="h-[24px] w-[24px]" />,
  <svg key="1" viewBox="0 0 24 24" className="h-[24px] w-[24px]">
    <path d="M1 1h16v16H1z" fill="#7dc088" stroke="#5b9a60" />
    <path d="M3 3h12v12H3z" fill="none" stroke="#fff" />
    <path d="M13 8l10 6-6 9-9-6z" fill="#cfe9cf" fillOpacity=".8" stroke="#6fb07a" strokeDasharray="3 1" />
  </svg>,
  <svg key="2" viewBox="0 0 24 24" className="h-[24px] w-[24px]" fill="none" stroke="#666">
    <path d="M6 1v22M9 1v16M16 1v12q0 3-7 3M20 1v12q0 6-11 7M1 16h8M1 20h8" />
    <path d="M1 6.500h22v3H1z" fill="#bfe2f6" stroke="#8fc3e2" />
  </svg>,
  <Funnel key="3" className="h-[24px] w-[22px]" />,
  <svg key="4" viewBox="0 0 24 24" className="h-[24px] w-[24px]" fill="none" stroke="#666">
    <path d="M17 1l-9 9" strokeWidth="2.500" />
    <path d="M8 8q-3 0-4 3-1 3-4 3 6 2 10-3z" fill="#b27b4a" stroke="none" />
    <path d="M9.500 13.500v9h14v-10H13l-2-3z" fill="#fff" />
    <path d="M15.500 16h5M15.500 20h5" />
    <path d="M12 15h2v2h-2zM12 19h2v2h-2z" fill="#7d67ab" stroke="none" />
  </svg>,
];

function Symbology() {
  return (
    <div className="ml-[6px] flex w-[480px] shrink-0 flex-col">
      <div className="flex h-[849px] flex-col border border-t-[5px] border-[#cbcbcb] bg-[#f7f9f8] pl-[6px]">
        <div className="-ml-[5px]">
          <PaneHeader title="Symbology" />
        </div>
        <div className="mt-[5px] flex justify-between pl-[4px]">
          <div className="flex">
            {symbologyIcons.map((ic, i) => (
              <div key={i} className={`flex h-[35px] w-[32px] justify-center pt-[2px] ${i === 0 ? "border-b-[3px] border-[#0078c8]" : "border-b border-[#c8c8c8]"}`}>
                {ic}
              </div>
            ))}
          </div>
          <svg viewBox="0 0 14 13" className="mt-[11px] mr-[9px] h-[13px] w-[14px]" fill="#555">
            <rect width="14" height="3" rx="1" />
            <rect y="5" width="14" height="3" rx="1" />
            <rect y="10" width="14" height="3" rx="1" />
          </svg>
        </div>
        <div className="mt-[9px] text-[13px] leading-[20px] font-semibold tracking-[0.05px] text-[#4c4c4c]">Primary symbology</div>
        <Select value="Graduated Colors" className="mt-[4px] w-[466px] pl-[2px]" />
        <div className="flex h-[143px] w-[466px] justify-between">
          <div>
            {fields.map(([l, v, m, d]) => (
              <div key={l} className={`flex items-center ${m}`}>
                <span className="w-[91px]">{l}</span>
                <Select value={v} disabled={d} className={`w-[301px] ${d ? "pl-[5px]" : "pl-[2px]"}`} />
                {l === "Field" && (
                  <div className="pl-[7px]">
                    <ExprIcon />
                  </div>
                )}
              </div>
            ))}
          </div>
          <div className="flex w-[17px] flex-col items-center bg-[#ececec] pt-[6px]">
            <svg viewBox="0 0 8 5" className="h-[5px] w-[7px]" fill="none" stroke="#555" strokeWidth="1.300">
              <path d="M.5 4.500L4 1l3.500 3.500" />
            </svg>
            <div className="mt-[8px] h-[89px] w-[9px] rounded-full bg-[#b4b4b4]" />
            <svg viewBox="0 0 8 5" className="mt-[24px] h-[5px] w-[7px]" fill="none" stroke="#555" strokeWidth="1.300">
              <path d="M.5.500L4 4 7.500.500" />
            </svg>
          </div>
        </div>
        <div className="mt-[10px] flex h-[9px] w-[466px] items-center justify-center gap-[1px] border-y-2 border-[#c9c9c9] pl-[4px]">
          <div className="-mt-[2px] size-[5px] rounded-full bg-[#cbcbcb]" />
          <div className="-mt-[2px] size-[5px] rounded-full bg-[#cbcbcb]" />
          <div className="-mt-[2px] size-[5px] rounded-full bg-[#cbcbcb]" />
        </div>
        <div className="mt-[10px] flex h-[21px] items-end">
          <div className="z-10 -mb-px flex h-[22px] w-[56px] items-center justify-center border border-b-0 border-[#ababab] bg-[#f9f9f9] pt-px">Classes</div>
          <div className="flex h-[19px] w-[68px] items-center justify-center border border-b-0 border-l-0 border-[#ababab] bg-[#f1f1f1]">Histogram</div>
          <div className="flex h-[19px] w-[46px] items-center justify-center border border-b-0 border-l-0 border-[#ababab] bg-[#f1f1f1]">Scales</div>
        </div>
        <div className="flex h-[519px] w-[465px] flex-col border border-[#ababab] bg-[#f9f9f9] px-[7px] pb-[4px]">
          <div className="flex h-[34px] items-center justify-end gap-[8px] pt-[3px] pr-[4px]">
            More <Caret className="h-[4px] w-[7px]" />
          </div>
          <div className="flex-1 border border-[#c8c8c8] text-[11px] tracking-[-0.1px]">
            <div className="flex h-[23px] border-b border-[#c8c8c8] bg-[#dedede] text-[#333]">
              <div className="flex w-[80px] items-center justify-between border-r border-[#c8c8c8] pr-[5px] pl-[6px]">
                Symbol <CaretUp />
              </div>
              <div className="flex w-[103px] items-center justify-between border-r border-[#c8c8c8] pr-[5px] pl-[6px]">
                Upper value <CaretUp />
              </div>
              <div className="flex items-center pl-[6px]">Label</div>
            </div>
            {classes.map(([c, v, l, p], i) => (
              <div key={v} className={`flex h-[27px] border-b border-[#c8c8c8] ${i % 2 ? "bg-[#eaeaea]" : "bg-white"}`}>
                <div className="flex w-[80px] items-center justify-between border-r border-[#c8c8c8] pr-[6px] pl-[20px]">
                  <div className={`h-[16px] w-[20px] border border-[#777] ${c}`} />
                  <Caret className="h-[3px] w-[5px]" />
                </div>
                <div className="flex w-[103px] items-center border-r border-[#c8c8c8] pl-[9px] tracking-[-0.2px]">
                  <span className="w-[16px]">≤</span>
                  {v}
                </div>
                <div className={`flex items-center ${p}`}>{l}</div>
              </div>
            ))}
          </div>
        </div>
      </div>
      <div className="-mt-px flex h-[21px] items-center">
        <div className="flex w-[53px] justify-center pt-[2px]">Catalog</div>
        <div className="flex h-[21px] w-[71px] items-center justify-center border border-t-0 border-[#cbcbcb] bg-[#f7f9f8] pt-[2px] text-[#0067c0]">Symbology</div>
      </div>
    </div>
  );
}

export default function App() {
  return (
    <div className="flex h-[1033px] w-[1921px] flex-col overflow-hidden bg-[#f1f1f1] font-['Open_Sans','Noto_Sans',sans-serif] text-[12px] tracking-[-0.4px] text-[#444]">
      <TitleBar />
      <TabRow />
      <Ribbon />
      <div className="flex h-[875px] pt-[6px] pl-[7px]">
        <Contents />
        <MapPane />
        <Symbology />
      </div>
      <div className="mt-[6px] h-px bg-[#dcdcdc]" />
    </div>
  );
}
